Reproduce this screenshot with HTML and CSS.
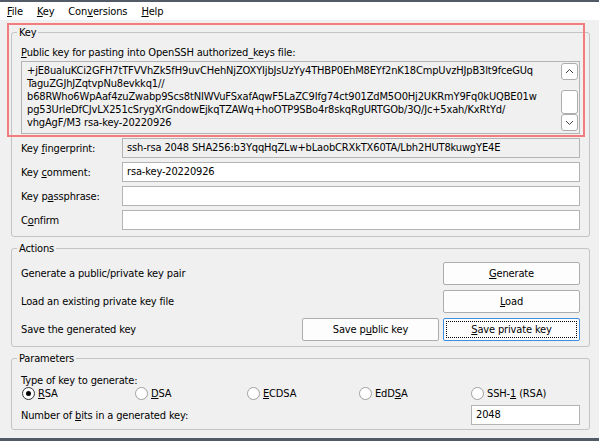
FILE: index.html
```html
<!DOCTYPE html>
<html>
<head>
<meta charset="utf-8">
<title>PuTTY Key Generator</title>
<link rel="stylesheet" href="styles.css">
</head>
<body>
<div class="window">
  <div class="edge-top"></div>
  <nav class="menubar">
    <span class="menu"><u>F</u>ile</span>
    <span class="menu"><u>K</u>ey</span>
    <span class="menu">Con<u>v</u>ersions</span>
    <span class="menu"><u>H</u>elp</span>
  </nav>
  <main class="panel">
    <div class="highlight"></div>

    <fieldset class="group">
      <legend>Key</legend>
      <div class="group-body">
        <div class="caption"><u>P</u>ublic key for pasting into OpenSSH authorized_keys file:</div>
        <div class="keybox">
          <div class="keytext">
            <div class="line">+jE8ualuKCi2GFH7tTFVVhZk5fH9uvCHehNjZOXYIjbJsUzYy4THBP0EhM8EYf2nK18CmpUvzHJpB3lt9fceGUq</div>
            <div class="line">TaguZGJhJZqtvpNu8evkkq1//</div>
            <div class="line">b68RWho6WpAaf4zuZwabp9Scs8tNIWVuFSxafAqwF5LaZC9Ifg74ct901ZdM5O0Hj2UKRmY9Fq0kUQBE01w</div>
            <div class="line">pg53UrleDfCJvLX251cSrygXrGndowEjkqTZAWq+hoOTP9SBo4r8skqRgURTGOb/3Q/Jc+5xah/KxRtYd/</div>
            <div class="line">vhgAgF/M3 rsa-key-20220926</div>
          </div>
          <div class="scrollbar">
            <div class="sb-btn"><svg width="15" height="15" viewBox="0 0 15 15"><polyline points="4,9 7.5,5.5 11,9" fill="none" stroke="#404040" stroke-width="1"/></svg></div>
            <div class="sb-track"><div class="sb-thumb"></div></div>
            <div class="sb-btn"><svg width="15" height="15" viewBox="0 0 15 15"><polyline points="4,6 7.5,9.5 11,6" fill="none" stroke="#404040" stroke-width="1"/></svg></div>
          </div>
        </div>
        <div class="fields">
          <div class="field"><span class="label">Key <u>f</u>ingerprint:</span><div class="input readonly">ssh-rsa 2048 SHA256:b3YqqHqZLw+bLaobCRXkTX60TA/Lbh2HUT8kuwgYE4E</div></div>
          <div class="field"><span class="label">Key <u>c</u>omment:</span><div class="input">rsa-key-20220926</div></div>
          <div class="field"><span class="label">Key p<u>a</u>ssphrase:</span><div class="input"></div></div>
          <div class="field"><span class="label">C<u>o</u>nfirm</span><div class="input"></div></div>
        </div>
      </div>
    </fieldset>

    <fieldset class="group">
      <legend>Actions</legend>
      <div class="group-body actions">
        <div class="action"><span class="text">Generate a public/private key pair</span><button class="btn"><u>G</u>enerate</button></div>
        <div class="action"><span class="text">Load an existing private key file</span><button class="btn"><u>L</u>oad</button></div>
        <div class="action"><span class="text">Save the generated key</span><button class="btn">Save p<u>u</u>blic key</button><button class="btn focused"><u>S</u>ave private key</button></div>
      </div>
    </fieldset>

    <fieldset class="group">
      <legend>Parameters</legend>
      <div class="group-body params">
        <div class="ptitle">Type of key to generate:</div>
        <div class="radios">
          <span class="radio"><span class="dot checked"></span><span class="rlabel"><u>R</u>SA</span></span>
          <span class="radio"><span class="dot"></span><span class="rlabel"><u>D</u>SA</span></span>
          <span class="radio"><span class="dot"></span><span class="rlabel"><u>E</u>CDSA</span></span>
          <span class="radio"><span class="dot"></span><span class="rlabel">EdD<u>S</u>A</span></span>
          <span class="radio"><span class="dot"></span><span class="rlabel">SSH-<u>1</u> (RSA)</span></span>
        </div>
        <div class="bits"><span class="text">Number of <u>b</u>its in a generated key:</span><div class="input bits-input">2048</div></div>
      </div>
    </fieldset>
  </main>
  <div class="edge-bottom"></div>
</div>
</body>
</html>
```

FILE: styles.css
```css
* { box-sizing: border-box; }
html, body { margin: 0; padding: 0; }
body {
  width: 599px;
  height: 441px;
  overflow: hidden;
  font-family: "DejaVu Sans Condensed", "Liberation Sans", sans-serif;
  font-size: 11px;
  line-height: 13px;
  letter-spacing: -0.15px;
  color: #000;
  background: #f0f0f0;
}
u { text-decoration: underline; text-underline-offset: 1px; }

.window { display: flex; flex-direction: column; height: 441px; }
.edge-top { flex: none; height: 2px; background: #515a66; }
.edge-bottom { flex: none; height: 3px; background: #515a66; }

.menubar {
  flex: none;
  height: 18px;
  background: #fff;
  display: flex;
  align-items: center;
  gap: 14px;
  padding-left: 7px;
}

.panel {
  flex: 1;
  position: relative;
  display: flex;
  flex-direction: column;
  gap: 5px;
  padding: 6px 9px 0 11px;
  background: #f0f0f0;
}

.highlight {
  position: absolute;
  left: 7px;
  top: 3px;
  width: 578px;
  height: 114px;
  border: 2px solid #f37c7c;
  pointer-events: none;
  z-index: 2;
}

.group {
  margin: 0;
  padding: 0;
  min-width: 0;
  border: 1px solid #c4c4c4;
  border-radius: 3px;
}
.group legend {
  margin-left: 5px;
  padding: 0 2px;
  height: 13px;
  line-height: 13px;
}
.group-body { padding: 7px 9px 6px 9px; }

.caption { margin-bottom: 2px; }

.keybox {
  display: flex;
  height: 73px;
  border: 1px solid #b4b4b4;
  background: #f0f0f0;
}
.keytext {
  flex: 1;
  min-width: 0;
  overflow: hidden;
  padding: 2px 0 0 5px;
}
.line { white-space: nowrap; height: 13px; }

.scrollbar {
  flex: none;
  width: 17px;
  margin-right: 1px;
  padding: 1px 0 2px 0;
  display: flex;
  flex-direction: column;
}
.sb-btn {
  flex: none;
  height: 17px;
  border: 1px solid #adadad;
  border-radius: 3px;
  background: #fff;
  display: flex;
  align-items: center;
  justify-content: center;
}
.sb-track {
  flex: 1;
  display: flex;
  flex-direction: column;
  justify-content: flex-end;
}
.sb-thumb {
  height: 24px;
  border: 1px solid #adadad;
  border-radius: 3px;
  background: #fff;
}

.fields {
  margin-top: 4px;
  display: flex;
  flex-direction: column;
  gap: 4px;
}
.field { display: flex; align-items: center; height: 20px; }
.field .label { width: 101px; flex: none; }
.input {
  height: 20px;
  border: 1px solid #b4b4b4;
  background: #fff;
  padding: 0 4px;
  line-height: 18px;
  white-space: nowrap;
  overflow: hidden;
}
.field .input { flex: 1; }
.input.readonly { background: #f0f0f0; }

.actions {
  display: flex;
  flex-direction: column;
  gap: 5px;
  padding-bottom: 5px;
}
.action { display: flex; align-items: center; height: 23px; gap: 4px; }
.action .text { flex: 1; }
.btn {
  flex: none;
  width: 137px;
  height: 23px;
  margin: 0;
  padding: 0;
  font: inherit;
  letter-spacing: inherit;
  color: #000;
  background: #fdfdfd;
  border: 1px solid #adadad;
  border-radius: 2px;
}
.btn.focused {
  border-color: #3c8ee0;
  outline: 1px dotted #000;
  outline-offset: -4px;
}

.params { padding-top: 9px; padding-bottom: 4px; }
.radios {
  display: grid;
  grid-template-columns: 113px 112px 112px 112px 1fr;
  height: 13px;
}
.radio { display: flex; align-items: center; gap: 3px; }
.rlabel { white-space: nowrap; }
.dot {
  flex: none;
  width: 13px;
  height: 13px;
  margin-left: 1px;
  border-radius: 50%;
  border: 1px solid #a0a0a0;
  background: #fff;
  display: flex;
  align-items: center;
  justify-content: center;
}
.dot.checked { border-color: #333; }
.dot.checked::before {
  content: "";
  width: 5px;
  height: 5px;
  border-radius: 50%;
  background: #000;
}
.bits { display: flex; align-items: center; margin-top: 5px; height: 20px; }
.bits .text { flex: 1; }
.bits-input { width: 109px; flex: none; }
```
